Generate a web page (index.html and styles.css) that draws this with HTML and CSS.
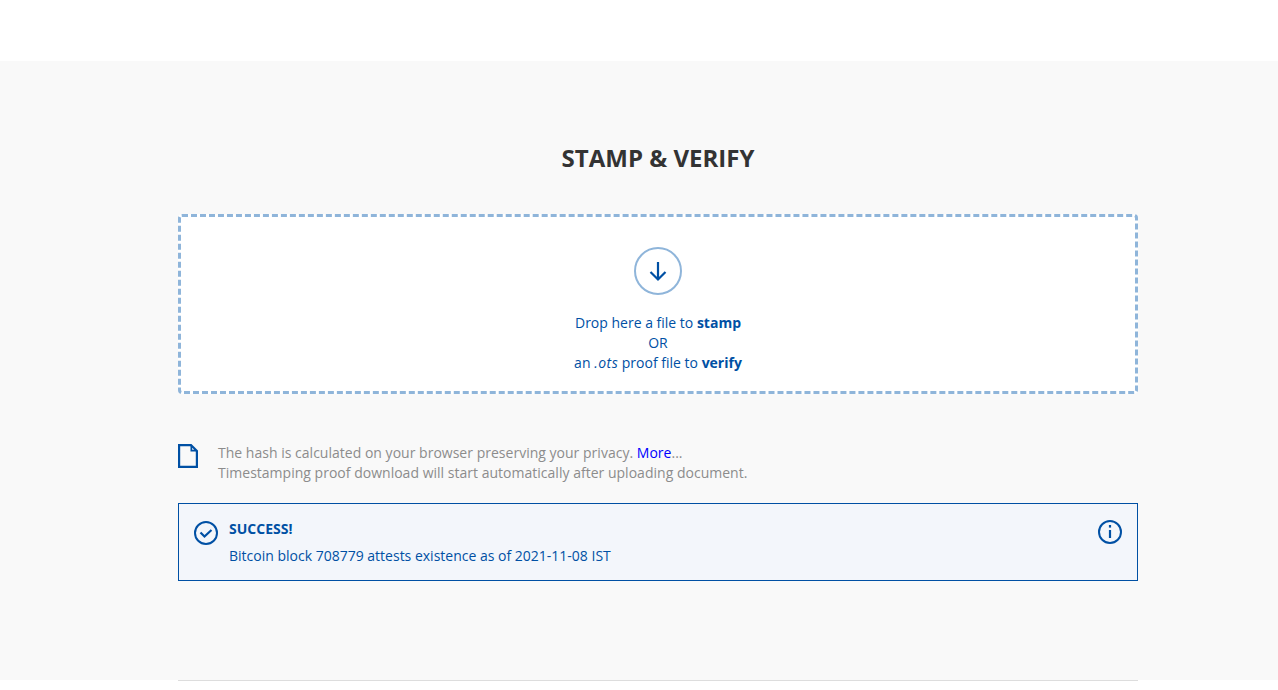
FILE: index.html
```html
<!DOCTYPE html>
<html lang="en">
<head>
<meta charset="utf-8">
<title>Stamp &amp; Verify</title>
<link rel="stylesheet" href="styles.css">
</head>
<body>
<header class="topbar"></header>
<main class="section">
  <div class="container">
    <h1 class="title">STAMP &amp; VERIFY</h1>
    <div class="dropzone">
      <span class="drop-icon">
        <svg width="48" height="48" viewBox="0 0 48 48" fill="none">
          <circle cx="24" cy="24" r="23" stroke="#8fb5da" stroke-width="2"/>
          <path d="M24 15V32.5M16.5 25L24 32.5L31.5 25" stroke="#0050a4" stroke-width="2.2"/>
        </svg>
      </span>
      <p class="drop-text">Drop here a file to <b>stamp</b><br>OR<br>an <i class="ext">.ots</i> proof file to <b>verify</b></p>
    </div>
    <div class="note">
      <svg class="note-icon" width="20" height="24" viewBox="0 0 20 24" fill="none">
        <path d="M1.1 1.1H13L18.9 7V22.9H1.1Z" stroke="#0050a4" stroke-width="2.2"/>
        <path d="M12.5 1V7.5H19L12.5 1Z" fill="#0050a4"/>
        <path d="M14.2 3.8V5.8H16.2Z" fill="#fff"/>
      </svg>
      <p class="note-text">The hash is calculated on your browser preserving your privacy. <a class="more" href="#">More</a>...<br>Timestamping proof download will start automatically after uploading document.</p>
    </div>
    <div class="alert">
      <svg class="alert-icon" width="24" height="24" viewBox="0 0 24 24" fill="none">
        <circle cx="12" cy="12" r="11" stroke="#0050a4" stroke-width="2"/>
        <path d="M6.5 11.5L10.5 15.5L17.5 9" stroke="#0050a4" stroke-width="2.2"/>
      </svg>
      <div class="alert-body">
        <div class="alert-title">SUCCESS!</div>
        <div class="alert-msg">Bitcoin block 708779 attests existence as of 2021-11-08 IST</div>
      </div>
      <svg class="info-icon" width="24" height="24" viewBox="0 0 24 24" fill="none">
        <circle cx="12" cy="12" r="11" stroke="#0050a4" stroke-width="2"/>
        <path d="M12 10V18" stroke="#0050a4" stroke-width="2.2"/>
        <path d="M12 5V7.6" stroke="#0050a4" stroke-width="2.2"/>
      </svg>
    </div>
  </div>
</main>
<div class="rule-wrap"><div class="rule"></div></div>
</body>
</html>
```
FILE: styles.css
```css
* { box-sizing: border-box; }
html, body { margin: 0; padding: 0; height: 690px; overflow: hidden; background: #fff; }
body { font-family: "Open Sans", sans-serif; font-size: 14px; line-height: 20px; color: #333; }
.topbar { height: 61px; background: #fff; }
.section { height: 619px; background: #f9f9f9; padding: 80px 0 0 178px; }
.container { width: 960px; }
.title { margin: 0; height: 34px; font-size: 24px; line-height: 34px; font-weight: 700; text-align: center; color: #333; }
.dropzone { margin-top: 39px; height: 180px; background: #fff; border: 3px dashed #8fb5da; border-radius: 4px; padding-top: 30px; display: flex; flex-direction: column; align-items: center; color: #0050a4; }
.drop-icon { display: block; width: 48px; height: 48px; }
.drop-icon svg, .note-icon, .alert-icon, .info-icon { display: block; }
.drop-text { margin: 18px 0 0; text-align: center; }
.ext { letter-spacing: 0.5px; }
.note { margin-top: 49px; display: flex; align-items: flex-start; }
.note-icon { margin-top: 1px; flex: none; }
.note-text { margin: 0 0 0 20px; color: #8c8c8c; letter-spacing: 0.015px; }
.more { color: #00f; text-decoration: none; }
.alert { margin-top: 20px; height: 78px; background: #f3f6fb; border: 1px solid #0050a4; padding: 16px 15px 0 15px; display: flex; align-items: flex-start; color: #0050a4; }
.alert-icon { margin-top: 1px; flex: none; }
.alert-body { flex: 1; margin-left: 11px; }
.alert-title { font-weight: 700; line-height: 20px; margin-top: -1px; }
.alert-msg { margin-top: 7px; }
.info-icon { flex: none; }
.rule-wrap { padding-left: 178px; }
.rule { width: 960px; height: 1px; background: #ddd; }
```
